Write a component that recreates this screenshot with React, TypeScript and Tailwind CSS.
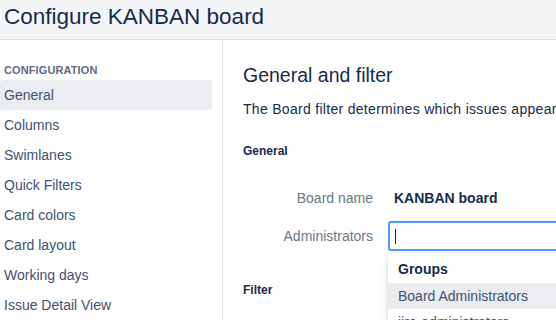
import React from 'react';

const navItems = [
  'General',
  'Columns',
  'Swimlanes',
  'Quick Filters',
  'Card colors',
  'Card layout',
  'Working days',
  'Issue Detail View',
];

export default function App() {
  return (
    <div className="w-[556px] h-[320px] overflow-hidden bg-white font-['Liberation_Sans',Arial,sans-serif] text-[#172b4d]">
      {/* Header */}
      <div className="h-[40px] bg-[#f4f5f7] border-b border-[#dfe1e6] flex items-center px-[4px]">
        <h1 className="text-[22.5px] leading-[28px] -mt-[6px] whitespace-nowrap">Configure KANBAN board</h1>
      </div>

      <div className="flex h-[280px]">
        {/* Sidebar */}
        <div className="w-[223px] shrink-0 border-r border-[#dfe1e6] pt-[22px]">
          <div className="px-[4px] text-[11px] leading-[16px] font-bold text-[#5e6c84] tracking-[0.01em]">
            CONFIGURATION
          </div>
          <ul className="mt-[2px] mr-[10px]">
            {navItems.map((item, i) => (
              <li
                key={item}
                className={
                  'h-[30px] flex items-center px-[4px] text-[14px] text-[#42526e] rounded-[3px] ' +
                  (i === 0 ? 'bg-[#ebecf0]' : '')
                }
              >
                {item}
              </li>
            ))}
          </ul>
        </div>

        {/* Main */}
        <div className="flex-1 min-w-0 overflow-hidden pl-[20px] pt-[23px]">
          <h2 className="text-[19.5px] leading-[24px] whitespace-nowrap">General and filter</h2>
          <p className="mt-[12px] text-[14px] leading-[20px] tracking-[0.3px] whitespace-nowrap">
            The Board filter determines which issues appear on the board.
          </p>
          <h3 className="mt-[24px] text-[12px] leading-[16px] font-bold">General</h3>

          <div className="mt-[29px] flex items-center h-[20px]">
            <div className="w-[130px] shrink-0 text-right text-[14px] text-[#6b778c]">Board name</div>
            <div className="ml-[21px] shrink-0 text-[14px] font-bold whitespace-nowrap">KANBAN board</div>
          </div>

          <div className="mt-[13px] flex items-center">
            <div className="w-[130px] shrink-0 text-right text-[14px] text-[#6b778c]">Administrators</div>
            <div className="relative ml-[15px] shrink-0">
              <div className="w-[200px] h-[30px] border-2 border-[#4c9aff] rounded-[3px] bg-white flex items-center">
                <span className="ml-[5px] w-px h-[15px] bg-[#172b4d]" />
              </div>
              {/* Dropdown */}
              <div className="absolute left-0 top-[32px] w-[200px] bg-white rounded-[3px] pt-[6px] shadow-[0_4px_8px_-2px_rgba(9,30,66,0.25),0_0_1px_rgba(9,30,66,0.31)] z-10">
                <div className="h-[20px] leading-[20px] px-[10px] text-[14px] font-bold whitespace-nowrap">Groups</div>
                <div className="mt-[4px] h-[26px] flex items-center px-[10px] bg-[#ebecf0] text-[14px] text-[#42526e] whitespace-nowrap">
                  Board Administrators
                </div>
                <div className="h-[26px] flex items-center px-[10px] text-[14px] text-[#42526e] whitespace-nowrap">
                  jira-administrators
                </div>
              </div>
            </div>
          </div>

          <h3 className="mt-[31px] text-[12px] leading-[16px] font-bold">Filter</h3>
        </div>
      </div>
    </div>
  );
}
